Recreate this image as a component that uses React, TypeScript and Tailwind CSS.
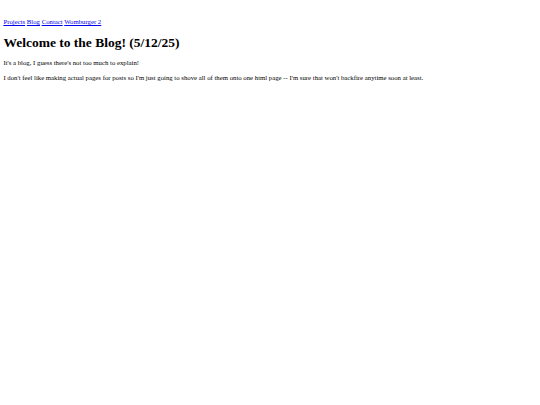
export default function App() {
  return (
    <div
      className="min-h-[405px] bg-white px-[3.4px] pt-[18px] text-black"
      style={{ fontFamily: '"Liberation Serif", "Times New Roman", serif' }}
    >
      {/* nav links, plain inline with spaces between */}
      <nav className="text-[6.75px] leading-[7.76px]">
        <a href="#" className="text-[#0000ee] underline">Projects</a>{" "}
        <a href="#" className="text-[#0000ee] underline">Blog</a>{" "}
        <a href="#" className="text-[#0000ee] underline">Contact</a>{" "}
        <a href="#" className="text-[#0000ee] underline">Womburger 2</a>
      </nav>

      <h1 className="mt-[9px] text-[13.5px] font-bold leading-[15.5px]">Welcome to the Blog! (5/12/25)</h1>

      <p className="mt-[9px] text-[6.75px] leading-[7.76px]">It's a blog, I guess there's not too much to explain!</p>
      <p className="mt-[6.75px] text-[6.75px] leading-[7.76px]">
        I don't feel like making actual pages for posts so I'm just going to shove all of them onto one html page -- I'm sure that won't backfire anytime soon at least.
      </p>
    </div>
  );
}
